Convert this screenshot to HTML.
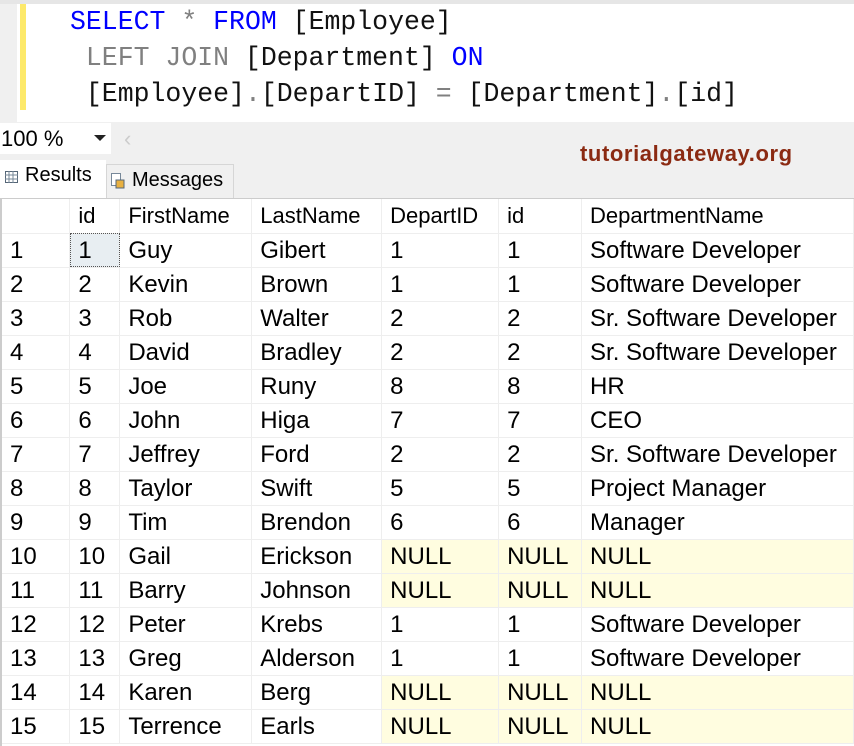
<!DOCTYPE html>
<html><head><meta charset="utf-8"><style>
*{margin:0;padding:0;box-sizing:border-box}
body{width:854px;height:746px;overflow:hidden;background:#f0f0f0;position:relative;font-family:"Liberation Sans",Arial,sans-serif}
.ed{position:absolute;left:0;top:0;width:854px;height:122px;background:#fff;border-top:4px solid #e6e6e6}
.gut{position:absolute;left:0;top:0;width:17px;height:118px;background:#f0f0f0}
.yb{position:absolute;left:20px;top:0;width:6px;height:106px;background:#fde96a}
.code{position:absolute;left:70px;top:0;font-family:"Liberation Mono",monospace;font-size:26.5px;line-height:36px;white-space:pre;color:#111}
.k{color:#0000ff}.g{color:#808080}
.zoom{position:absolute;left:0;top:123px;width:111px;height:31px;background:#fff;font-size:22px;line-height:31px;padding-left:1px}
.tri{position:absolute;left:94px;top:135px;width:0;height:0;border-left:6px solid transparent;border-right:6px solid transparent;border-top:6px solid #222}
.lt{position:absolute;left:124px;top:126px;color:#ccc;font-size:22px}
.logo{position:absolute;left:580px;top:141px;font-size:22px;font-weight:bold;color:#8b2a12;letter-spacing:0.6px}
.t1{position:absolute;left:0;top:160px;width:106px;height:39px;background:#fff;font-size:20px;padding:4px 0 0 25px}
.t2{position:absolute;left:106px;top:164px;width:128px;height:34px;border:1px solid #d6d6d6;border-bottom:none;font-size:20px;padding:4px 0 0 25px}
.grid{position:absolute;left:0;top:198px;width:854px;height:548px;background:#fff;border-top:1px solid #ccc;border-left:2px solid #ccc}
table{border-collapse:collapse;font-size:24px;color:#000}
td{height:33px;border-right:1px solid #eee;border-bottom:1px solid #eee;padding:0 0 0 8px;white-space:nowrap;line-height:33px}
tr:first-child td{height:34px;font-size:22px}
.n{background:#fffde0}
.sel{background:#e8eef2;outline:1px dotted #555;outline-offset:-1px}
</style></head><body>
<div class="ed"><div class="gut"></div><div class="yb"></div>
<div class="code"><span class="k">SELECT</span> <span class="g">*</span> <span class="k">FROM</span> [Employee]
 <span class="g">LEFT JOIN</span> [Department] <span class="k">ON</span>
 [Employee]<span class="g">.</span>[DepartID] <span class="g">=</span> [Department]<span class="g">.</span>[id]</div></div>
<div class="zoom">100 %</div><div class="tri"></div><div class="lt">‹</div>
<div class="logo">tutorialgateway.org</div>
<div class="t1"><svg style="position:absolute;left:5px;top:11px" width="13" height="12"><rect x=".5" y=".5" width="12" height="11" fill="#fff" stroke="#567"/><path d="M0 4h13M0 8h13M4 0v12M8 0v12" stroke="#789"/></svg>Results</div>
<div class="t2"><svg style="position:absolute;left:4px;top:8px" width="14" height="16"><rect x=".5" y=".5" width="9" height="12" fill="#fff" stroke="#789"/><rect x="5" y="7" width="8" height="8" fill="#e8b040" stroke="#567"/></svg>Messages</div>
<div class="grid"><table>
<colgroup><col style="width:68px"><col style="width:50px"><col style="width:132px"><col style="width:130px"><col style="width:117px"><col style="width:83px"><col style="width:272px"></colgroup>
<tr><td></td><td>id</td><td>FirstName</td><td>LastName</td><td>DepartID</td><td>id</td><td>DepartmentName</td></tr>
<tr><td>1</td><td class="sel">1</td><td>Guy</td><td>Gibert</td><td>1</td><td>1</td><td>Software Developer</td></tr>
<tr><td>2</td><td>2</td><td>Kevin</td><td>Brown</td><td>1</td><td>1</td><td>Software Developer</td></tr>
<tr><td>3</td><td>3</td><td>Rob</td><td>Walter</td><td>2</td><td>2</td><td>Sr. Software Developer</td></tr>
<tr><td>4</td><td>4</td><td>David</td><td>Bradley</td><td>2</td><td>2</td><td>Sr. Software Developer</td></tr>
<tr><td>5</td><td>5</td><td>Joe</td><td>Runy</td><td>8</td><td>8</td><td>HR</td></tr>
<tr><td>6</td><td>6</td><td>John</td><td>Higa</td><td>7</td><td>7</td><td>CEO</td></tr>
<tr><td>7</td><td>7</td><td>Jeffrey</td><td>Ford</td><td>2</td><td>2</td><td>Sr. Software Developer</td></tr>
<tr><td>8</td><td>8</td><td>Taylor</td><td>Swift</td><td>5</td><td>5</td><td>Project Manager</td></tr>
<tr><td>9</td><td>9</td><td>Tim</td><td>Brendon</td><td>6</td><td>6</td><td>Manager</td></tr>
<tr><td>10</td><td>10</td><td>Gail</td><td>Erickson</td><td class="n">NULL</td><td class="n">NULL</td><td class="n">NULL</td></tr>
<tr><td>11</td><td>11</td><td>Barry</td><td>Johnson</td><td class="n">NULL</td><td class="n">NULL</td><td class="n">NULL</td></tr>
<tr><td>12</td><td>12</td><td>Peter</td><td>Krebs</td><td>1</td><td>1</td><td>Software Developer</td></tr>
<tr><td>13</td><td>13</td><td>Greg</td><td>Alderson</td><td>1</td><td>1</td><td>Software Developer</td></tr>
<tr><td>14</td><td>14</td><td>Karen</td><td>Berg</td><td class="n">NULL</td><td class="n">NULL</td><td class="n">NULL</td></tr>
<tr><td>15</td><td>15</td><td>Terrence</td><td>Earls</td><td class="n">NULL</td><td class="n">NULL</td><td class="n">NULL</td></tr>
</table></div>
</body></html>
